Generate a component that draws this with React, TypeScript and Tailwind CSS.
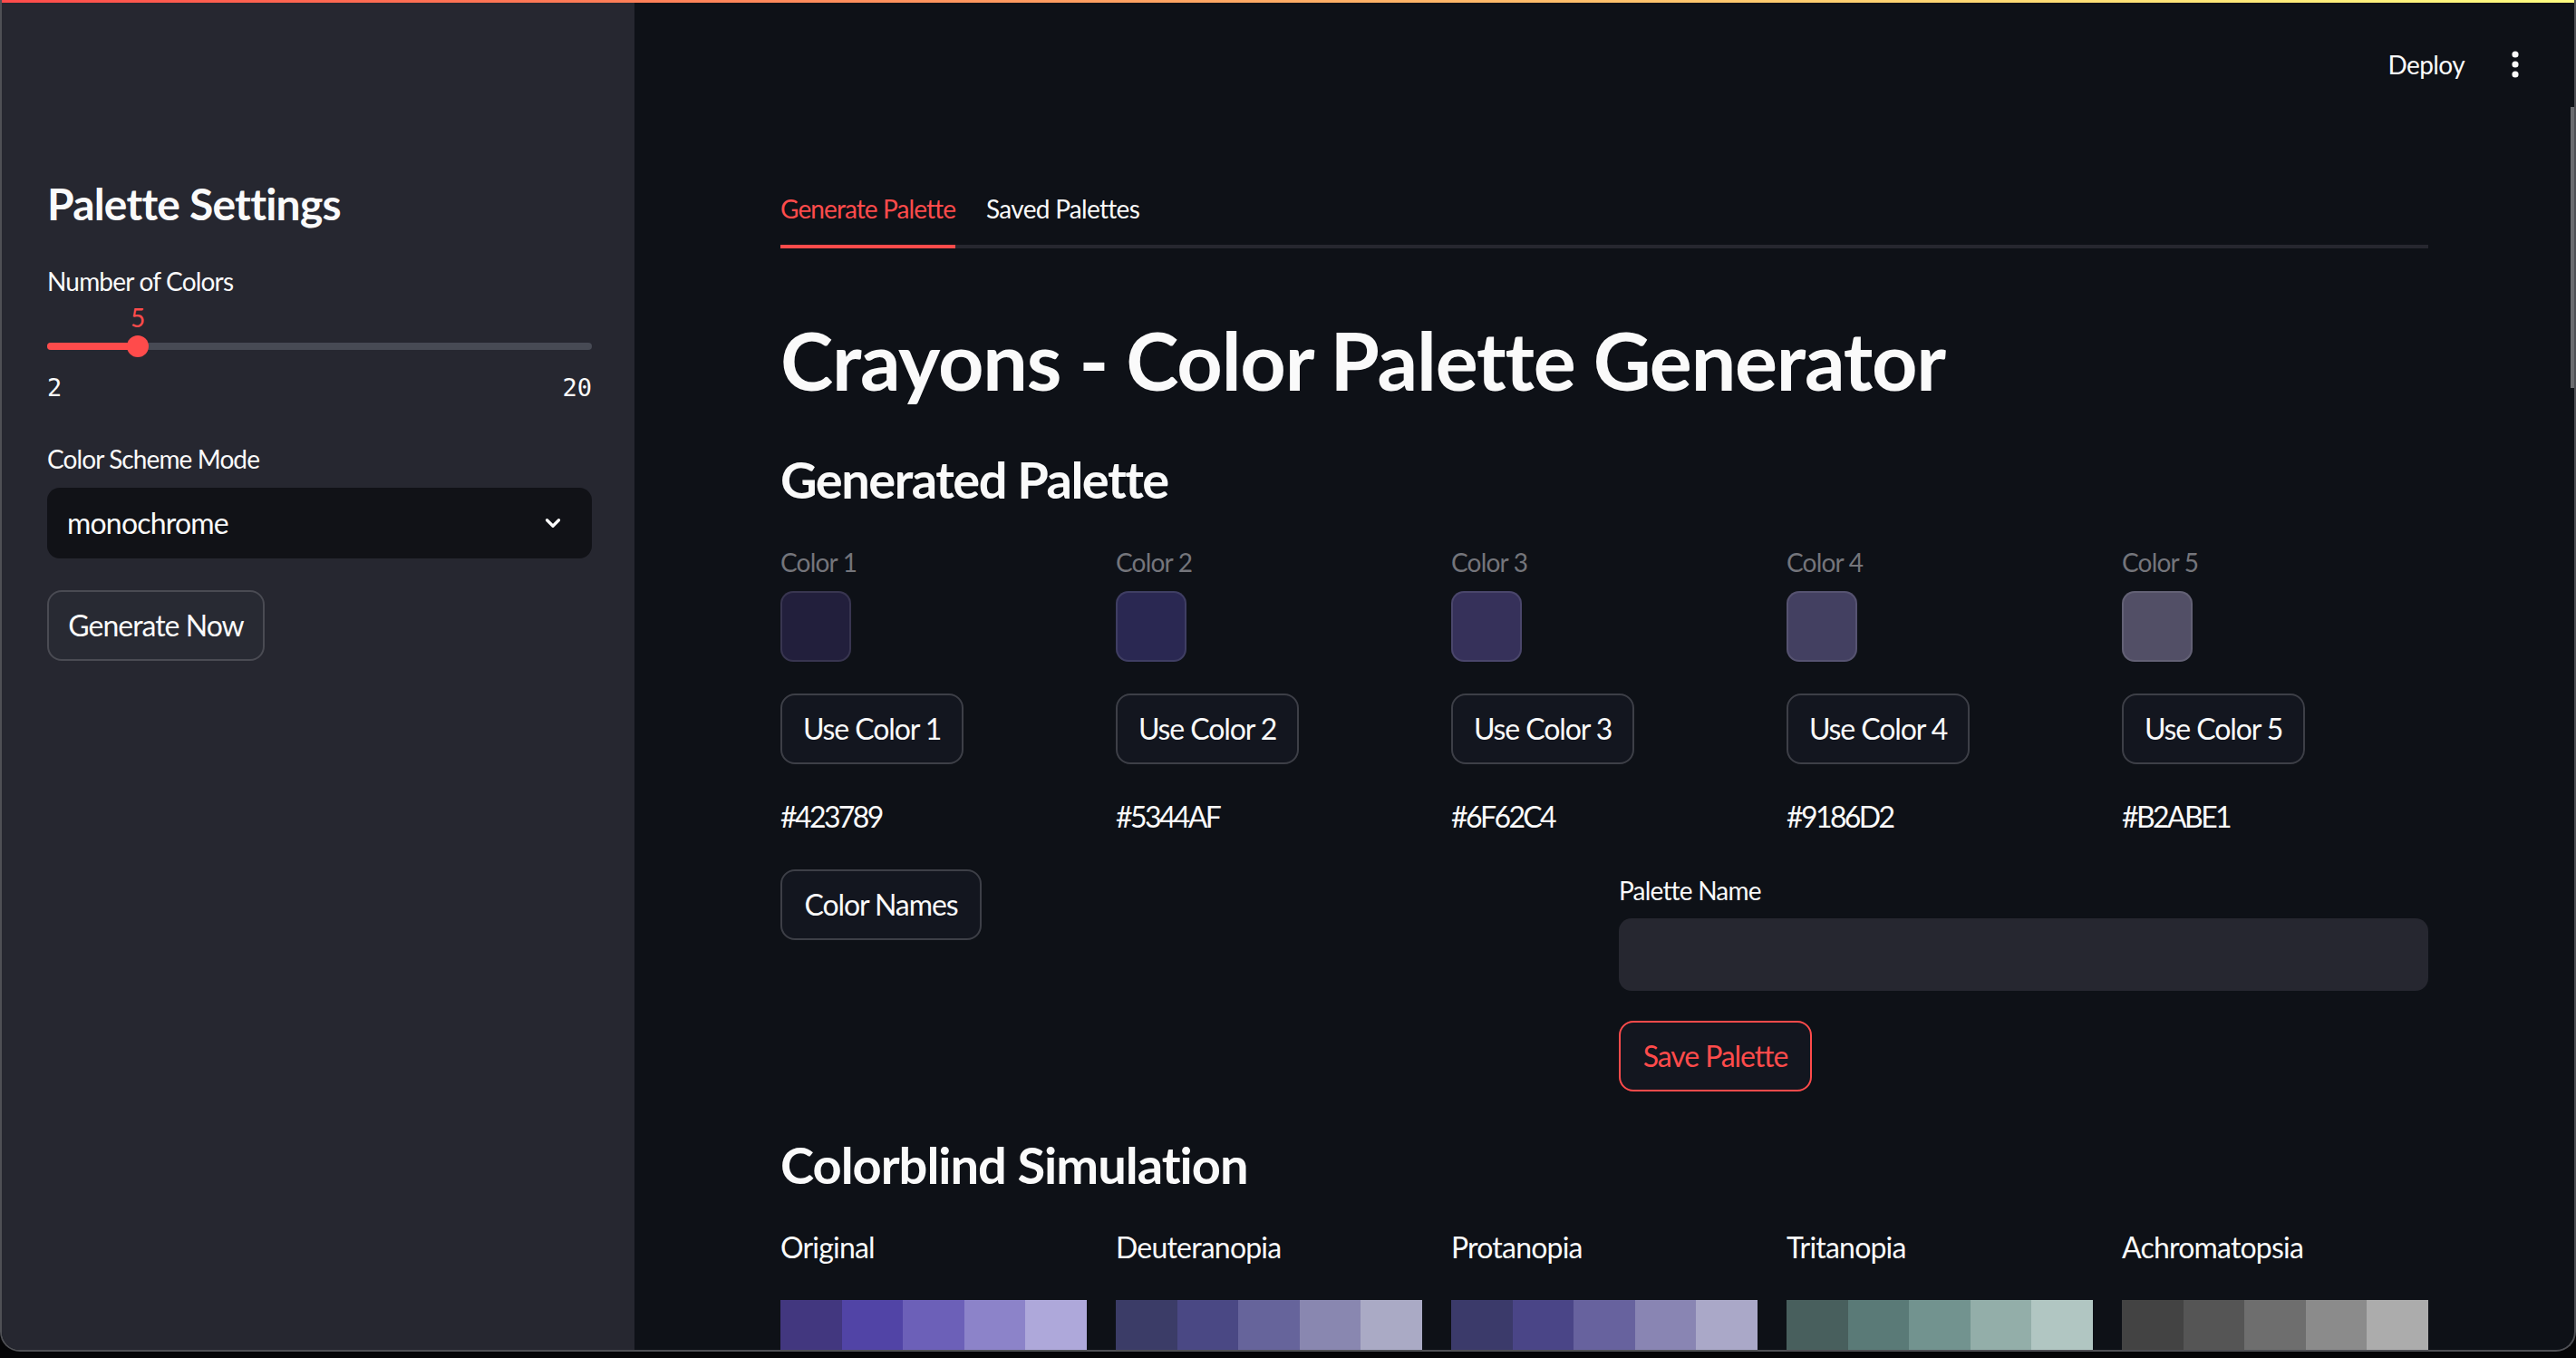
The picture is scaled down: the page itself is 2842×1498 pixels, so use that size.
import { ChevronDown } from "lucide-react";

const colors = [
  { label: "Color 1", hex: "#423789", swatch: "#221f3c" },
  { label: "Color 2", hex: "#5344AF", swatch: "#2a2852" },
  { label: "Color 3", hex: "#6F62C4", swatch: "#36315a" },
  { label: "Color 4", hex: "#9186D2", swatch: "#434061" },
  { label: "Color 5", hex: "#B2ABE1", swatch: "#524f66" },
];

const simulations = [
  { name: "Original", strip: ["#42377f", "#5144a6", "#6c60b8", "#8c83c9", "#aea8da"] },
  { name: "Deuteranopia", strip: ["#3b3c67", "#4a4884", "#66649b", "#8987b0", "#aaaac5"] },
  { name: "Protanopia", strip: ["#3b3a6a", "#4a4587", "#67629e", "#8985b3", "#aaa8c8"] },
  { name: "Tritanopia", strip: ["#485f5d", "#5a7a77", "#72938f", "#93aea9", "#b1c6c2"] },
  { name: "Achromatopsia", strip: ["#434343", "#555555", "#6e6e6e", "#8b8b8b", "#acacac"] },
];

function Sidebar() {
  return (
    <aside className="w-[698px] shrink-0 bg-[#262730] pl-[50px] pr-[47px] pt-[195px]">
      <h2 className="text-[48px] leading-[60px] font-bold tracking-[-0.8px] text-[#fafafa]">Palette Settings</h2>

      <div className="mt-[35px] text-[28px] leading-[40px] tracking-[-0.8px] text-[#fafafa]">Number of Colors</div>
      <div className="relative h-[40px]">
        <span className="absolute left-[100px] -translate-x-1/2 text-[28px] leading-[40px] text-[#ff4b4b]">5</span>
      </div>
      <div className="flex h-[24px] items-center">
        <div className="flex h-[8px] w-full items-center rounded-full bg-[#474a54]">
          <div className="h-full w-[100px] rounded-l-full bg-[#ff4b4b]" />
          <div className="-ml-[12px] h-[24px] w-[24px] rounded-full bg-[#ff4b4b]" />
        </div>
      </div>
      <div className="mt-[14px] flex justify-between font-['DejaVu_Sans_Mono',monospace] text-[27px] leading-[40px] text-[#fafafa]">
        <span>2</span>
        <span>20</span>
      </div>

      <div className="mt-[38px] text-[28px] leading-[40px] tracking-[-0.9px] text-[#fafafa]">Color Scheme Mode</div>
      <div className="mt-[12px] flex h-[78px] items-center justify-between rounded-[14px] bg-[#111217] pl-[22px] pr-[30px]">
        <span className="text-[32px] tracking-[-0.8px] text-[#fafafa]">monochrome</span>
        <ChevronDown className="h-[26px] w-[26px] text-[#fafafa]" strokeWidth={3} />
      </div>

      <button className="mt-[35px] flex h-[78px] w-[240px] items-center justify-center rounded-[16px] border-2 border-[#4a4b53] bg-[#282a33] text-[32px] tracking-[-1px] text-[#fafafa]">
        Generate Now
      </button>
    </aside>
  );
}

function Btn({ children, w, red }: { children: string; w: string; red?: boolean }) {
  return (
    <button
      className={
        red
          ? "flex h-[78px] items-center justify-center rounded-[16px] border-2 border-[#ff4b4b] bg-[#13161f] text-[32px] tracking-[-1.1px] text-[#ff4b4b] " + w
          : "flex h-[78px] items-center justify-center rounded-[16px] border-2 border-[#3d3f47] bg-[#13161f] text-[32px] tracking-[-1.1px] text-[#fafafa] " + w
      }
    >
      {children}
    </button>
  );
}

export default function App() {
  return (
    <div className="h-[1498px] w-[2842px] overflow-hidden bg-[#050507] font-[Lato,sans-serif]">
      <div className="relative flex h-[1491px] overflow-hidden rounded-b-[22px] border-x-2 border-b-2 border-[#4f5055] bg-[#0e1117]">
        <div className="absolute inset-x-0 top-0 h-[3px] bg-gradient-to-r from-[#ff4b4b] to-[#fffd80]" />
        <Sidebar />

        <main className="relative flex-1">
          <div className="absolute right-0 top-[118px] h-[310px] w-[4px] bg-[#6b6c70]" />

          <header className="flex h-[142px] items-center justify-end gap-[44px] pr-[53px]">
            <span className="text-[28px] tracking-[-0.6px] text-[#fafafa]">Deploy</span>
            <svg width="24" height="30" viewBox="0 0 24 30" fill="#fafafa">
              <circle cx="12" cy="4" r="3.6" />
              <circle cx="12" cy="15" r="3.6" />
              <circle cx="12" cy="26" r="3.6" />
            </svg>
          </header>

          <div className="pl-[161px] pr-[161px]">
            <div className="mt-[68px] flex gap-[34px] shadow-[inset_0_-4px_0_#26272f]">
              <div className="border-b-4 border-[#ff4b4b] pb-[20px] text-[28px] leading-[40px] tracking-[-0.9px] text-[#ff4b4b]">
                Generate Palette
              </div>
              <div className="pb-[20px] text-[28px] leading-[40px] tracking-[-0.7px] text-[#fafafa]">Saved Palettes</div>
            </div>

            <h1 className="mt-[70px] text-[88px] leading-[106px] font-bold tracking-[-1.2px] text-[#fafafa]">
              Crayons - Color Palette Generator
            </h1>

            <h3 className="mt-[45px] text-[56px] leading-[68px] font-bold tracking-[-1.5px] text-[#fafafa]">
              Generated Palette
            </h3>

            <div className="mt-[37px] grid grid-cols-5 gap-x-[32px]">
              {colors.map((c, i) => (
                <div key={c.label} className="flex flex-col items-start">
                  <div className="text-[28px] leading-[40px] tracking-[-0.8px] text-[#74757b]">{c.label}</div>
                  <div
                    className="mt-[12px] h-[78px] w-[78px] rounded-[14px] border-2 border-white/10"
                    style={{ backgroundColor: c.swatch }}
                  />
                  <div className="mt-[35px]">
                    <Btn w="w-[202px]">{`Use Color ${i + 1}`}</Btn>
                  </div>
                  <div className="mt-[34px] text-[32px] leading-[48px] tracking-[-2.6px] text-[#fafafa]">{c.hex}</div>
                </div>
              ))}
            </div>

            <div className="mt-[34px] grid grid-cols-2 gap-x-[32px]">
              <div>
                <Btn w="w-[222px]">Color Names</Btn>
              </div>
              <div className="pt-[3px]">
                <div className="text-[28px] leading-[40px] tracking-[-0.8px] text-[#fafafa]">Palette Name</div>
                <div className="mt-[11px] h-[80px] rounded-[14px] bg-[#262730]" />
                <div className="mt-[33px]">
                  <Btn w="w-[213px]" red>
                    Save Palette
                  </Btn>
                </div>
              </div>
            </div>

            <h3 className="mt-[47px] text-[56px] leading-[68px] font-bold tracking-[-1px] text-[#fafafa]">
              Colorblind Simulation
            </h3>

            <div className="mt-[33px] grid grid-cols-5 gap-x-[32px]">
              {simulations.map((s) => (
                <div key={s.name}>
                  <div className="text-[32px] leading-[48px] tracking-[-0.8px] text-[#fafafa]">{s.name}</div>
                  <div className="mt-[34px] flex h-[112px]">
                    {s.strip.map((col) => (
                      <div key={col} className="flex-1" style={{ backgroundColor: col }} />
                    ))}
                  </div>
                </div>
              ))}
            </div>
          </div>
        </main>
      </div>
    </div>
  );
}
